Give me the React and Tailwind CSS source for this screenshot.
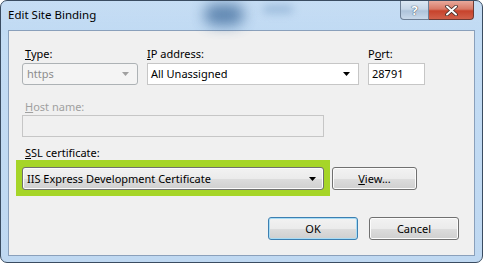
import React from "react";

const font = { fontFamily: '"Segoe UI", "Noto Sans", "Liberation Sans", sans-serif' };

function Arrow({ color = "#000" }) {
  return (
    <svg width="7" height="4" viewBox="0 0 7 4" className="shrink-0">
      <path d="M0 0H7L3.5 4Z" fill={color} />
    </svg>
  );
}

function Btn({ children, focused, className = "" }) {
  return (
    <div
      className={`flex items-center justify-center h-[23px] rounded-[3px] border text-[11px] text-black ${
        focused
          ? "border-[#3c7fb1] shadow-[inset_0_0_0_1px_#a8dcf5] bg-[linear-gradient(#f2f2f2_0%,#ebebeb_50%,#dddddd_51%,#cfcfcf_100%)]"
          : "border-[#707070] shadow-[inset_0_0_0_1px_#fcfcfc] bg-[linear-gradient(#f2f2f2_0%,#ebebeb_50%,#dddddd_51%,#cfcfcf_100%)]"
      } ${className}`}
    >
      {children}
    </div>
  );
}

export default function App() {
  return (
    <div className="w-[483px] h-[263px] bg-white" style={font}>
      <div className="relative w-[483px] h-[263px] rounded-[7px] border border-[#3a4c61] overflow-hidden bg-[linear-gradient(#bcd7f2_0%,#c3dcf4_15%,#bfd8f1_100%)] flex flex-col">
        {/* aero blur decoration */}
        <div className="absolute left-[203px] top-[2px] w-[40px] h-[22px] rounded-full bg-[#2f5f93] blur-[7px] opacity-75" />
        <div className="absolute left-[262px] top-[4px] w-[30px] h-[8px] rounded-full bg-[#6f99c4] blur-[4px] opacity-60" />
        <div className="absolute left-0 top-0 w-full h-[29px] bg-[linear-gradient(rgba(255,255,255,0.15),rgba(255,255,255,0))]" />

        {/* title bar */}
        <div className="relative h-[29px] flex items-start shrink-0">
          <div className="pl-[7px] pt-[7px] text-[12px] leading-[14px] text-black" style={{ fontSize: "11.5px" }}>Edit Site Binding</div>
          <div className="ml-auto mr-[8px] flex">
            <div className="w-[29px] h-[19px] border border-[#6d7f95] border-t-0 rounded-bl-[4px] flex items-center justify-center bg-[linear-gradient(#dbe7f3_0%,#c6d6e7_45%,#aec3da_55%,#c9d9ea_100%)]">
              <span className="text-[13px] font-bold text-white leading-none" style={{ textShadow: "0 0 1px #3b4a5c, 0 0 1px #3b4a5c" }}>?</span>
            </div>
            <div className="w-[45px] h-[19px] border border-[#6e3a33] border-t-0 border-l-0 rounded-br-[4px] flex items-center justify-center bg-[linear-gradient(#e8a99b_0%,#d87966_45%,#c7432c_55%,#d1604a_100%)]">
              <svg width="13" height="11" viewBox="0 0 13 11">
                <path d="M2 1.5L11 9.5M11 1.5L2 9.5" stroke="#3b2a26" strokeWidth="3.6" strokeLinecap="round" />
                <path d="M2 1.5L11 9.5M11 1.5L2 9.5" stroke="#fff" strokeWidth="2" strokeLinecap="round" />
              </svg>
            </div>
          </div>
        </div>

        {/* content panel */}
        <div className="mx-[7px] mb-[6px] flex-1 border border-[#8aa0bb] bg-[#f0f0f0] pl-[13px] pt-[16px] flex flex-col text-[11px] leading-[14px] text-black">
          {/* row 1 */}
          <div className="flex gap-[9px]">
            <div className="flex flex-col w-[116px]">
              <div className="pl-[3px] h-[15px]"><span className="underline">T</span>ype:</div>
              <div className="mt-[1px] h-[22px] rounded-[3px] border border-[#adb2b5] bg-[#f4f4f4] flex items-center pl-[4px] pr-[8px] text-[#8d8d8d]">
                <span className="flex-1">https</span>
                <Arrow color="#a0a0a0" />
              </div>
            </div>
            <div className="flex flex-col w-[212px]">
              <div className="h-[15px]"><span className="underline">I</span>P address:</div>
              <div className="mt-[1px] h-[22px] border border-[#c6c6c6] bg-white flex items-center pl-[3px] pr-[8px]">
                <span className="flex-1">All Unassigned</span>
                <Arrow />
              </div>
            </div>
            <div className="flex flex-col w-[57px]">
              <div className="h-[15px]">P<span className="underline">o</span>rt:</div>
              <div className="mt-[1px] h-[22px] border border-[#c6c6c6] bg-white flex items-center pl-[3px]">28791</div>
            </div>
          </div>

          {/* host name */}
          <div className="mt-[15px] pl-[3px] h-[15px] text-[#a0a0a0]"><span className="underline">H</span>ost name:</div>
          <div className="w-[302px] h-[22px] border border-[#c6c6c6] bg-[#f0f0f0]" />

          {/* SSL */}
          <div className="mt-[9px] pl-[3px] h-[15px]"><span className="underline">S</span>SL certificate:</div>
          <div className="mt-[-1px] flex items-center">
            <div className="-ml-[6px] bg-[#a6d528] px-[6px] pt-[7px] pb-[6px]">
              <div className="w-[302px] h-[23px] rounded-[3px] border border-[#707070] shadow-[inset_0_0_0_1px_#fcfcfc] bg-[linear-gradient(#f2f2f2_0%,#ebebeb_50%,#dddddd_51%,#cfcfcf_100%)] flex items-center pl-[4px] pr-[7px]">
                <span className="flex-1">IIS Express Development Certificate</span>
                <Arrow />
              </div>
            </div>
            <Btn className="ml-[2px] mt-[1px] w-[85px]"><span><span className="underline">V</span>iew...</span></Btn>
          </div>

          {/* buttons */}
          <div className="mt-[21px] flex pl-[246px] gap-[11px]">
            <Btn focused className="w-[90px]">OK</Btn>
            <Btn className="w-[90px]">Cancel</Btn>
          </div>
        </div>
      </div>
    </div>
  );
}
